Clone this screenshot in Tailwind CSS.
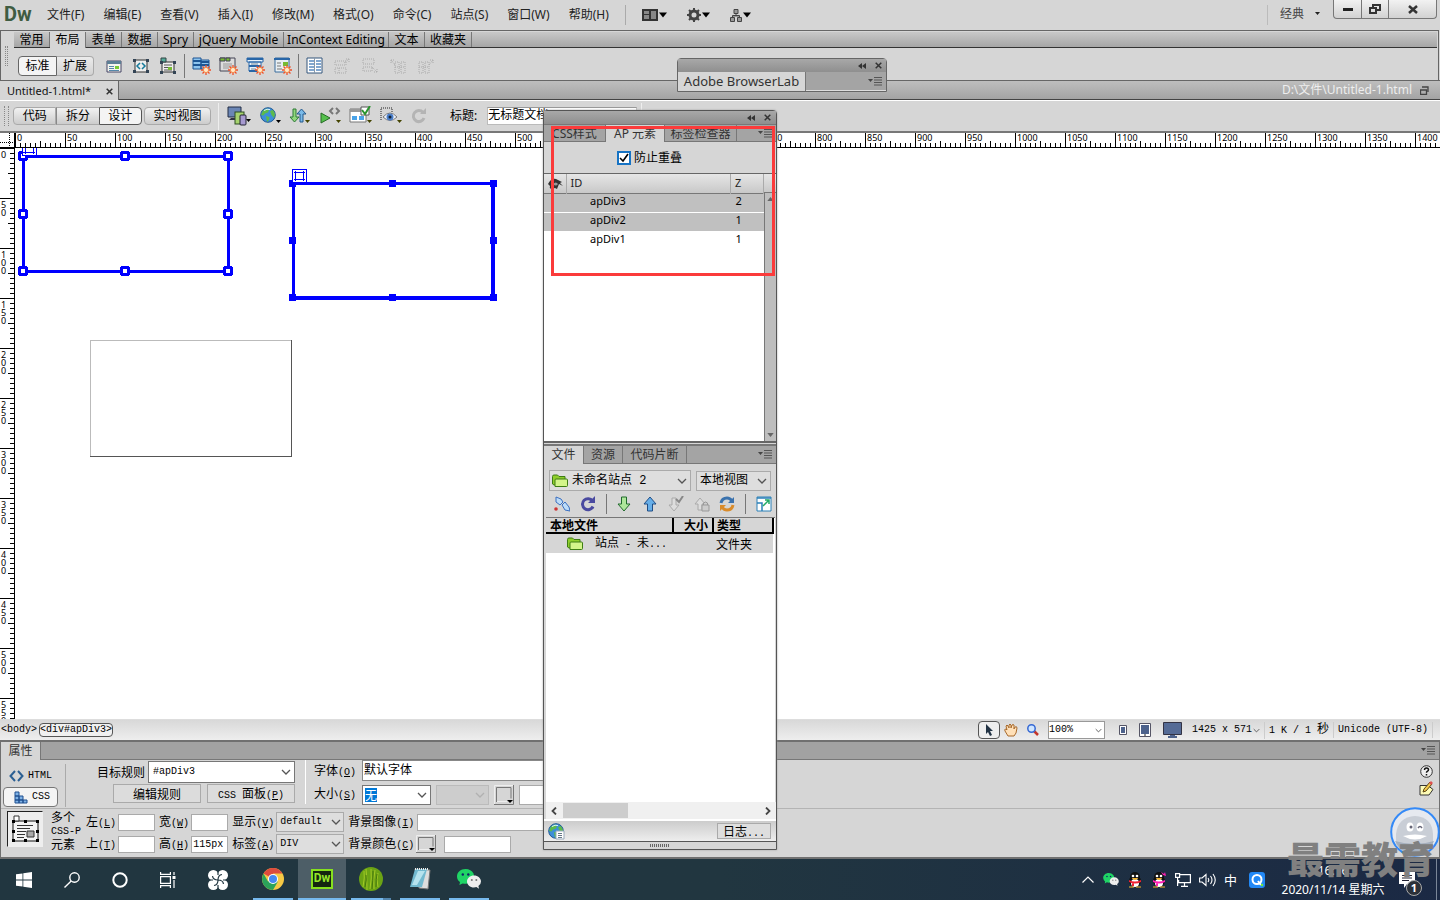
<!DOCTYPE html>
<html lang="zh-CN">
<head>
    <meta charset="UTF-8">
    <meta name="viewport" content="width=device-width, initial-scale=1.0">
    <title>Untitled-1.html</title>
    <script src="https://cdn.jsdelivr.net/npm/@tailwindcss/browser@4"></script>
</head>
<body class="relative flex flex-col h-screen overflow-hidden bg-[#d6d6d6] text-black text-xs leading-4 font-['Noto_Sans','Noto_Sans_CJK_SC',sans-serif]">

    <!-- Shared icons -->
    <svg class="hidden">
        <symbol id="chevron" viewBox="0 0 10 6"><path d="M1 1l4 4 4-4" fill="none" stroke="#555" stroke-width="1.3"/></symbol>
        <symbol id="caret" viewBox="0 0 8 5"><path d="M0 0h8L4 5z"/></symbol>
        <symbol id="panelMenu" viewBox="0 0 14 9"><path d="M0 2h5L2.500 5z" fill="#444"/><path d="M6 .5h8M6 3h8M6 5.500h8M6 8h8" stroke="#555"/></symbol>
        <symbol id="collapse" viewBox="0 0 8 6"><path d="M4 0v6L0 3zM8 0v6L4 3z" fill="#333"/></symbol>
        <symbol id="cross" viewBox="0 0 7 7"><path d="M.7 .7l5.600 5.600M6.300 .7L.7 6.300" stroke="#333" stroke-width="1.500"/></symbol>
        <symbol id="spark" viewBox="0 0 10 10"><path d="M5 0v10M0 5h10M1.500 1.500l7 7M8.500 1.500l-7 7" stroke="#f0502a" stroke-width="1.300"/><circle cx="5" cy="5" r="2.600" fill="#ffe9c9" stroke="#f58a4a"/></symbol>
        <symbol id="folder" viewBox="0 0 16 13"><path d="M.5 10V2.500Q.5 1 2 1h3.500L7 2.500h6V11H2z" fill="#8fce2c" stroke="#3e7d14"/><path d="M3 12.500V6q0-1 1-1h10.500q1 0 1 1v5.500q0 1-1 1z" fill="#d3f58a" stroke="#3e7d14"/></symbol>
        <symbol id="globe" viewBox="0 0 16 16"><circle cx="8" cy="8" r="7.300" fill="#3d8fd8" stroke="#225a94"/><path d="M3 3.500l4-2 2 1.500-1 2.500-3 1-1.500 2L1 8zM6 9l3.500 1L9 13l-2 2zM10 4l3-1 2 4-1 4-2.500-3z" fill="#5dbb4b"/><path d="M4 3.500q3-2 6-1" stroke="#d9f2ff" fill="none"/></symbol>
        <symbol id="wechat" viewBox="0 0 24 20"><path d="M8.500 0C3.500 0 0 3.400 0 7.400c0 2.400 1.200 4.200 3 5.600L2.400 16l3.200-1.600q6 1.600 9.600-2.400Q18 8 16.500 4.500 14 0 8.500 0z" fill="#1fd465"/><circle cx="5.800" cy="5.500" r="1.200" fill="#126"/><circle cx="11.300" cy="5.500" r="1.200" fill="#126"/><path d="M17 6.500c-4 0-7 2.700-7 6s3 6 7 6q1.200 0 2.400-.4L22 19.700l-.6-2.600q2.600-1.800 2.600-4.600c0-3.300-3-6-7-6z" fill="#eee"/><circle cx="14.800" cy="11" r="1" fill="#777"/><circle cx="19.300" cy="11" r="1" fill="#777"/></symbol>
    </svg>

    <!-- Menu bar -->
    <header class="flex h-[30px] shrink-0">
        <h1 class="pl-1 w-[47px] text-xl leading-7 font-bold text-[#3f5c42] font-['Roboto',sans-serif]">Dw</h1>
        <nav class="flex gap-[19px] pt-[7px] text-[#222]">
            <a href="#">文件(F)</a>
            <a href="#">编辑(E)</a>
            <a href="#">查看(V)</a>
            <a href="#">插入(I)</a>
            <a href="#">修改(M)</a>
            <a href="#">格式(O)</a>
            <a href="#">命令(C)</a>
            <a href="#">站点(S)</a>
            <a href="#">窗口(W)</a>
            <a href="#">帮助(H)</a>
        </nav>
        <div class="flex items-center gap-5 ml-4 my-[5px] pl-4 border-l border-[#aaa]">
            <button class="flex items-center gap-px" aria-label="布局">
                <svg class="w-4 h-3" viewBox="0 0 16 12"><path d="M0 0h16v12H0z" fill="#333"/><path d="M2 2h5v3H2zM2 6h5v4H2zM9 2h5v8H9z" fill="#888"/></svg>
                <svg class="w-2 h-[6px]"><use href="#caret"/></svg>
            </button>
            <button class="flex items-center gap-px" aria-label="扩展 Dreamweaver">
                <svg class="w-[14px] h-[14px]" viewBox="0 0 14 14"><circle cx="7" cy="7" r="4" fill="none" stroke="#444" stroke-width="3"/><path d="M7 0v3M7 11v3M0 7h3M11 7h3M2 2l2 2M10 10l2 2M12 2l-2 2M4 10l-2 2" stroke="#444" stroke-width="2"/></svg>
                <svg class="w-2 h-[6px]"><use href="#caret"/></svg>
            </button>
            <button class="flex items-center gap-px" aria-label="站点">
                <svg class="w-3 h-[13px]" viewBox="0 0 12 13"><path d="M4 .5h4v4H4zM.5 8.500h4v4h-4zM7.500 8.500h4v4h-4zM6 4.500v2M2.500 8V6.500h7V8" fill="#999" stroke="#444"/></svg>
                <svg class="w-2 h-[6px]"><use href="#caret"/></svg>
            </button>
        </div>
        <button class="flex items-center gap-[11px] ml-auto mt-[5px] mb-[5px] pl-3 pb-[3px] border-l border-[#bbb] text-[#444]">经典
            <svg class="w-[5px] h-[3px]" viewBox="0 0 5 3"><path d="M0 0h5L2.500 3z" fill="#222"/></svg>
        </button>
        <div class="flex h-[19px] ml-[13px] mr-[3px] rounded-b border border-t-0 border-[#777] bg-linear-to-b from-[#f2f2f2] to-[#d2d2d2] divide-x divide-[#777]">
            <button class="flex justify-center items-center w-7" aria-label="最小化"><svg class="w-[10px] h-[3px]"><path d="M0 0h10v3H0z" fill="#222"/></svg></button>
            <button class="flex justify-center items-center w-[27px]" aria-label="还原"><svg class="w-3 h-[10px]" viewBox="0 0 12 10"><path d="M4 3V1h7v5H8M1 4h6v5H1z" fill="none" stroke="#333" stroke-width="2"/></svg></button>
            <button class="flex justify-center items-center w-[47px]" aria-label="关闭"><svg class="w-[10px] h-[9px]" viewBox="0 0 10 9"><path d="M1 1l8 7M9 1L1 8" stroke="#333" stroke-width="2.500"/></svg></button>
        </div>
    </header>

    <!-- Insert bar -->
    <section class="flex h-[50px] shrink-0 mr-px border-t border-x border-[#666]">
        <div class="w-[3px] h-5 ml-1 mr-[6px] mt-[15px] border-x border-dotted border-[#888]"></div>
        <div class="flex-1 mt-px">
            <div class="flex h-4 mr-px border-b border-[#333] bg-linear-to-b from-[#c8c8c8] to-[#a6a6a6]">
                <button class="w-9 border-r border-[#777]">常用</button>
                <button class="w-9 h-4 border-r border-[#777] bg-[#d6d6d6]">布局</button>
                <button class="w-9 border-r border-[#777]">表单</button>
                <button class="w-9 border-r border-[#777]">数据</button>
                <button class="w-9 border-r border-[#777]">Spry</button>
                <button class="w-[90px] border-r border-[#777]">jQuery Mobile</button>
                <button class="w-[105px] border-r border-[#777] whitespace-nowrap">InContext Editing</button>
                <button class="w-9 border-r border-[#777]">文本</button>
                <button class="w-[47px] border-r border-[#777]">收藏夹</button>
            </div>
            <div class="flex items-center h-[31px] pt-1 pl-1">
                <button class="w-[39px] h-5 rounded-l border border-[#666] bg-[#f4f4f4]">标准</button>
                <button class="w-[37px] h-5 rounded-r border border-l-0 border-[#aaa] bg-linear-to-b from-[#ececec] to-[#d2d2d2]">扩展</button>
                <div class="flex items-center gap-[9px] ml-[11px]">
                    <svg class="w-[18px] h-[18px]" viewBox="0 0 18 18"><path d="M2 4h14v11H2z" fill="#f5f5ee" stroke="#446"/><path d="M2 4h14v3H2z" fill="#5c7f95"/><path d="M4 9.500h5M4 11.500h5M4 13.500h10" stroke="#58a"/><path d="M10 9h4v3h-4z" fill="#7c3"/></svg>
                    <svg class="w-[18px] h-[18px]" viewBox="0 0 18 18"><path d="M3 3h12v12H3z" fill="#eee" stroke="#333"/><path d="M1 2h3v3H1zM14 2h3v3h-3zM1 13h3v3H1zM14 13h3v3h-3z" fill="#345"/><path d="M8 6L5 9l3 3M10 6l3 3-3 3" fill="none" stroke="#167a9a" stroke-width="1.500"/></svg>
                    <svg class="w-[18px] h-[18px]" viewBox="0 0 18 18"><path d="M3 5h12v10H3z" fill="#eee" stroke="#333"/><path d="M2 1h5v4H2z" fill="#5a9" stroke="#344"/><path d="M1 4h3v3H1zM14 4h3v3h-3zM1 14h3v3H1zM14 14h3v3h-3z" fill="#345"/><path d="M5 8h8M5 10.500h4M5 13h8" stroke="#555"/><path d="M9 10h4v3H9z" fill="#7b3"/></svg>
                </div>
                <div class="h-6 mx-[7px] border-l border-[#777]"></div>
                <div class="flex items-center gap-2">
                    <svg class="w-[19px] h-[18px]" viewBox="0 0 19 18"><path d="M1 1h8v11H1zM9 3h8v9H9z" fill="#8ec4ee" stroke="#1c5594"/><path d="M1 4h8M1 8h16M9 5h8" stroke="#1c5594" stroke-width="2"/><use href="#spark" x="9" y="8" width="10" height="10"/></svg>
                    <svg class="w-[19px] h-[18px]" viewBox="0 0 19 18"><path d="M1 1h15v13H1z" fill="#ddd" stroke="#445"/><path d="M1 1h5v3H1zM7 1h4v3H7z" fill="#7b3" stroke="#445"/><path d="M4 7h9M4 9h9M4 11h6" stroke="#999"/><use href="#spark" x="9" y="8" width="10" height="10"/></svg>
                    <svg class="w-[19px] h-[18px]" viewBox="0 0 19 18"><path d="M1 1h16v4H1zM3 5h12v9H3z" fill="#e9f2fa" stroke="#2866a8"/><path d="M1 2h16M3 9h12M3 14h9" stroke="#2866a8" stroke-width="2"/><path d="M5 7h7M5 12h5" stroke="#789"/><use href="#spark" x="9" y="8" width="10" height="10"/></svg>
                    <svg class="w-[19px] h-[18px]" viewBox="0 0 19 18"><path d="M2 1h14v14H2z" fill="#e8eef2" stroke="#3b6c9d"/><path d="M1 2h16" stroke="#2866a8" stroke-width="2"/><path d="M10 5h5v4h-5z" fill="#7b3"/><path d="M4 6h4M4 9h4M4 12h5" stroke="#777"/><use href="#spark" x="9" y="8" width="10" height="10"/></svg>
                </div>
                <div class="h-6 ml-[6px] mr-[7px] border-l border-[#777]"></div>
                <div class="flex items-center gap-[10px]">
                    <svg class="w-[17px] h-[17px]" viewBox="0 0 17 17"><path d="M1 1h15v15H1z" fill="#fff" stroke="#34577c"/><path d="M3 4h5M10 4h5M3 7h5M10 7h5M3 10h5M10 10h5M3 13h5M10 13h5" stroke="#5a8bc0" stroke-width="1.500"/><path d="M8.500 1v15" stroke="#89a"/></svg>
                    <svg class="w-[18px] h-[18px]" viewBox="0 0 18 18"><path d="M2 4h11v4H2zM2 11h11v5H2zM11 6l5-4M16 2v3M16 2h-3M6 11v5" fill="none" stroke="#aaa" stroke-dasharray="1 1"/></svg>
                    <svg class="w-[18px] h-[18px]" viewBox="0 0 18 18"><path d="M2 2h11v5H2zM2 10h9v4H2zM11 10l5 5M16 15v-3M16 15h-3" fill="none" stroke="#aaa" stroke-dasharray="1 1"/></svg>
                    <svg class="w-[18px] h-[18px]" viewBox="0 0 18 18"><path d="M6 5h4v11H6zM12 5h4v11h-4zM6 8L2 3M2 3v3M2 3h3M6 10h10" fill="none" stroke="#aaa" stroke-dasharray="1 1"/></svg>
                    <svg class="w-[18px] h-[18px]" viewBox="0 0 18 18"><path d="M2 5h4v11H2zM8 5h4v11H8zM12 8l4-5M16 3v3M16 3h-3M2 10h10" fill="none" stroke="#aaa" stroke-dasharray="1 1"/></svg>
                </div>
            </div>
        </div>
    </section>

    <!-- Document tabs -->
    <section class="flex h-5 shrink-0 border-t border-[#666] border-b border-b-[#444] bg-linear-to-b from-[#bebebe] to-[#a4a4a4]">
        <div class="flex items-center justify-between w-[119px] pl-[7px] pr-[5px] h-5 bg-[#d6d6d6] border-r border-[#666]">
            <a href="#" class="text-[11px] text-[#111]">Untitled-1.html*</a>
            <button aria-label="关闭"><svg class="w-[7px] h-[7px]"><use href="#cross"/></svg></button>
        </div>
        <div class="flex items-center gap-2 ml-auto mr-[11px] text-[#eee]">D:\文件\Untitled-1.html
            <svg class="w-[9px] h-[9px]" viewBox="0 0 9 9"><path d="M2 1h6v5M.5 4h6v4.500h-6zM0 4h7" fill="none" stroke="#444" stroke-width="1.300"/></svg>
        </div>
    </section>

    <!-- Document toolbar -->
    <section class="flex items-center h-[33px] shrink-0 border-b-2 border-[#777] border-t border-t-white pl-1">
        <div class="w-[5px] h-5 mr-1 border-x border-dotted border-[#888]"></div>
        <div class="flex h-[18px] w-[129px] leading-4">
            <button class="flex-1 rounded-l border border-[#aaa] bg-linear-to-b from-[#f2f2f2] to-[#ccc]">代码</button>
            <button class="flex-1 border border-x-0 border-[#aaa] border-l border-l-[#888] bg-linear-to-b from-[#f2f2f2] to-[#ccc]">拆分</button>
            <button class="flex-1 rounded-r border border-[#555] bg-[#f4f4f4]">设计</button>
        </div>
        <button class="w-[67px] h-[18px] leading-4 ml-[2px] rounded border border-[#aaa] bg-linear-to-b from-[#f2f2f2] to-[#ccc]">实时视图</button>
        <div class="h-[27px] ml-[7px] border-l border-[#eee]"></div>
        <div class="flex items-center gap-2 ml-2">
            <svg class="w-[24px] h-5" viewBox="0 0 24 20"><path d="M1 1h13v10H1z" fill="#6b86b5" stroke="#222c44"/><path d="M4 12h6l2 2H2z" fill="#334"/><rect x="8" y="6" width="9" height="12" fill="#a7d36f" stroke="#2c4c22"/><rect x="13" y="9" width="6" height="10" rx="1" fill="#a79ad0" stroke="#223"/><path d="M19 13h5l-2.500 3z"/></svg>
            <svg class="w-[22px] h-5" viewBox="0 0 22 20"><use href="#globe" x="1" y="1" width="16" height="16"/><path d="M17 14h5l-2.500 3z"/></svg>
            <svg class="w-[22px] h-5" viewBox="0 0 22 20"><path d="M4 3h3v8h3l-4.500 5L1 11h3z" fill="#91d77c" stroke="#2c7a36"/><path d="M11 16h3V8h3l-4.500-5L8 8h3z" fill="#79b9e8" stroke="#24588c"/><path d="M16 14h5l-2.500 3z" fill="#440"/></svg>
            <svg class="w-[22px] h-5" viewBox="0 0 22 20"><path d="M2 7l9 5-9 5z" fill="#55c04c" stroke="#266b26"/><path d="M14 2l-3 3 3 3M17 2l3 3-3 3" fill="none" stroke="#777" stroke-width="2"/><path d="M17 14h5l-2.500 3z" fill="#440"/></svg>
            <svg class="w-[23px] h-5" viewBox="0 0 23 20"><path d="M1 3h16v13H1z" fill="#fff" stroke="#777"/><path d="M1 3h16v3H1z" fill="#999"/><path d="M3 10h5v4H3zM10 10h5v4h-5z" fill="#4aa3e8"/><path d="M12 1h8v8h-8z" fill="#fff" stroke="#555"/><path d="M13 4l3 4 5-8" fill="none" stroke="#29952d" stroke-width="2"/><path d="M18 14h5l-2.500 3z" fill="#440"/></svg>
            <svg class="w-[23px] h-5" viewBox="0 0 23 20"><path d="M1 14V2h11v4" fill="none" stroke="#222" stroke-dasharray="1 1"/><path d="M3 11q7-8 14 0-7 7-14 0z" fill="#eef3fb" stroke="#777"/><circle cx="10" cy="11" r="3.500" fill="#4c7fc9"/><circle cx="10" cy="11" r="1.500" fill="#123"/><path d="M17 14h5l-2.500 3z" fill="#440"/></svg>
            <svg class="w-4 h-4" viewBox="0 0 16 16"><path d="M12 4.500A5.500 5.500 0 1 0 13 10" fill="none" stroke="#b4b4b4" stroke-width="3"/><path d="M9 6h6V0z" fill="#b4b4b4"/></svg>
        </div>
        <label for="docTitle" class="ml-[23px]">标题:</label>
        <input id="docTitle" type="text" value="无标题文档" class="w-[150px] h-[18px] ml-[10px] pb-1 border border-t-[#999] border-[#bbb] bg-white">
        <div class="h-[27px] ml-1 border-l border-[#eee]"></div>
    </section>

    <!-- Horizontal ruler -->
    <section class="flex h-[15px] shrink-0 bg-white border-b border-black">
        <div class="flex w-[15px] shrink-0 border-r border-black">
            <svg class="w-[14px] h-[14px]"><path d="M0 9.500h14M9.500 0v14" stroke="#000" stroke-dasharray="1 1"/></svg>
        </div>
        <div class="grid flex-1 min-w-0 overflow-hidden">
            <svg class="col-start-1 row-start-1 w-full h-[14px]">
                <pattern id="ticksX" width="50" height="14" patternUnits="userSpaceOnUse"><path d="M.5 0v14M5.500 10v4M10.500 10v4M15.500 10v4M20.500 10v4M25.500 8v6M30.500 10v4M35.500 10v4M40.500 10v4M45.500 10v4" stroke="#000"/></pattern>
                <rect width="100%" height="14" fill="url(#ticksX)"/>
            </svg>
            <div id="rulerX" class="col-start-1 row-start-1 flex min-w-0 text-[9px] leading-[10px]"></div>
        </div>
    </section>

    <!-- Canvas with vertical ruler -->
    <section class="flex flex-1 min-h-0 bg-white">
        <div class="grid w-[15px] shrink-0 min-h-0 overflow-hidden border-r border-black">
            <svg class="col-start-1 row-start-1 w-[14px] h-full">
                <pattern id="ticksY" width="14" height="50" patternUnits="userSpaceOnUse"><path d="M0 .5h14M10 5.500h4M10 10.500h4M10 15.500h4M10 20.500h4M8 25.500h6M10 30.500h4M10 35.500h4M10 40.500h4M10 45.500h4" stroke="#000"/></pattern>
                <rect width="14" height="100%" fill="url(#ticksY)"/>
            </svg>
            <div id="rulerY" class="col-start-1 row-start-1 min-h-0 h-0 text-[9px] leading-[8px]"></div>
        </div>
        <main class="relative flex-1 overflow-hidden">
            <svg class="absolute left-0 top-0 w-[500px] h-[320px]" shape-rendering="crispEdges">
                <path d="M8.500 8.500h205v115h-205z" fill="none" stroke="#00f" stroke-width="3"/>
                <g fill="#fff" stroke="#00f" stroke-width="3" stroke-linejoin="bevel">
                    <path d="M4.500 4.500h7v7h-7zM106.500 4.500h7v7h-7zM209.500 4.500h7v7h-7zM4.500 62.500h7v7h-7zM209.500 62.500h7v7h-7zM4.500 119.500h7v7h-7zM106.500 119.500h7v7h-7zM209.500 119.500h7v7h-7z"/>
                </g>
                <path d="M7.500-5.500h14v13h-14z" fill="#fff" stroke="#00f"/>
                <path d="M8 4.500h12M10.500 0v6M18.500 0v6" stroke="#00f"/>
                <path d="M478 35.500H278.500V149" fill="none" stroke="#00f" stroke-width="3"/>
                <path d="M478 34v116H277" fill="none" stroke="#00f" stroke-width="4"/>
                <path d="M274 32h7v7h-7zM374 32h7v7h-7zM475 32h7v7h-7zM274 89h7v7h-7zM475 89h7v7h-7zM274 146h7v7h-7zM374 146h7v7h-7zM475 146h7v7h-7z" fill="#00f"/>
                <path d="M277.500 21.500h14v13h-14z" fill="#fff" stroke="#00f"/>
                <path d="M279 24.500h11M279 31.500h11M280.500 23v10M288.500 23v10" stroke="#00f"/>
                <path d="M75.500 309V192.500H276" fill="none" stroke="#bbb"/>
                <path d="M276.500 192V308.500H75" fill="none" stroke="#555"/>
            </svg>
        </main>
    </section>

    <!-- Tag selector and status bar -->
    <footer class="flex items-center h-[21px] shrink-0 border-t border-[#ddd] bg-linear-to-b from-[#d8d8d8] to-[#eee] text-[10px] font-['Liberation_Mono','Noto_Sans_CJK_SC',monospace]">
        <a href="#" class="ml-px">&lt;body&gt;</a>
        <a href="#" class="ml-[2px] rounded border border-[#555] bg-[#f0f0f0] leading-3">&lt;div#apDiv3&gt;</a>
        <button class="flex items-center justify-center w-[22px] h-[18px] ml-auto rounded border border-[#555] bg-[#eee]" aria-label="选取工具"><svg class="w-[8px] h-3" viewBox="0 0 8 12"><path d="M1 0v10l2-2 2 4 2-1-2-4h3z" fill="#234"/></svg></button>
        <button class="ml-1" aria-label="手形工具"><svg class="w-[14px] h-[14px]" viewBox="0 0 14 14"><path d="M4 13L1 8Q0 6 2 6l1 1-1-4q1-2 2 0l1 2V2q1-2 2 0v3l1-3q1-1 2 0v4l1-2q2-1 2 1l-1 5-2 3z" fill="#ffe0b8" stroke="#a86a2c"/></svg></button>
        <button class="ml-[9px]" aria-label="缩放工具"><svg class="w-3 h-3" viewBox="0 0 12 12"><path d="M7 7l4 4" stroke="#c3352b" stroke-width="2.500"/><circle cx="4.500" cy="4.500" r="3.700" fill="#cfe6ff" stroke="#3568d4" stroke-width="1.500"/></svg></button>
        <div class="grid items-center w-[57px] h-[18px] ml-[9px]">
            <select aria-label="缩放比率" class="col-start-1 row-start-1 appearance-none h-[18px] pb-1 border border-[#999] bg-white"><option>100%</option></select>
            <svg class="col-start-1 row-start-1 justify-self-end w-[7px] h-[5px] mr-[3px] pointer-events-none"><use href="#chevron"/></svg>
        </div>
        <svg class="w-2 h-[10px] ml-[14px]" viewBox="0 0 8 10"><path d="M.5 .5h7v9h-7z" fill="#fff" stroke="#556"/><path d="M2 2h4v6H2z" fill="#4d628c"/></svg>
        <svg class="w-3 h-[14px] ml-3" viewBox="0 0 12 14"><path d="M.5 .5h11v13H.5z" fill="#fff" stroke="#556"/><path d="M2 2h8v9H2z" fill="#4d628c"/><path d="M5 12h2" stroke="#222"/></svg>
        <svg class="w-[19px] h-4 ml-3" viewBox="0 0 19 16"><path d="M.5 .5h18v12H.5z" fill="#556b96" stroke="#334"/><path d="M7 13h5v1h2v2H5v-2h2z" fill="#4d628c"/></svg>
        <button class="flex items-center gap-px ml-[10px]">1425 x 571<svg class="w-[7px] h-[5px]"><use href="#chevron"/></svg></button>
        <span class="ml-1 pl-1 border-l border-[#ccc]">1 K / 1 <span class="text-xs">秒</span></span>
        <span class="ml-1 pl-1 pr-1 mr-[7px] border-x border-[#ccc]">Unicode (UTF-8)</span>
    </footer>

    <!-- Property inspector -->
    <section class="h-[119px] shrink-0 border border-b-2 border-t-2 border-[#707070] font-['Noto_Sans_CJK_SC',sans-serif]">
        <div class="flex h-[18px] bg-[#a2a2a2] border-b border-[#777]">
            <h2 class="w-10 h-[18px] text-center leading-4 border-r border-[#777] bg-[#d6d6d6] text-[#333]">属性</h2>
            <button class="ml-auto mr-1" aria-label="面板菜单"><svg class="w-[14px] h-[9px]"><use href="#panelMenu"/></svg></button>
        </div>
        <div class="flex h-[49px] border-b border-[#b4b4b4]">
            <div class="flex flex-col justify-end w-[65px] mt-1 mb-px pl-[2px] border-r border-[#aaa] text-[10px] font-['Liberation_Mono',monospace]">
                <button class="flex items-center gap-1 h-[22px] pl-[6px]">
                    <svg class="w-[15px] h-[12px]" viewBox="0 0 15 12"><path d="M6 1L1.500 6 6 11M9 1l4.500 5L9 11" fill="none" stroke="#2b5f93" stroke-width="2"/></svg>HTML
                </button>
                <button class="flex items-center gap-1 w-[55px] h-5 pl-[10px] rounded border border-[#777] bg-[#f4f4f4]">
                    <svg class="w-[14px] h-[13px]" viewBox="0 0 14 13"><path d="M1 1h4v4H1zM1 5h4v4H1zM5 5h4v4H5zM1 9h4v3H1zM5 9h4v3H5zM9 9h4v3H9z" fill="#7fb2e6" stroke="#1f4f8f"/></svg>CSS
                </button>
            </div>
            <div class="grid grid-cols-[88px_88px] gap-x-[6px] content-start ml-[47px]">
                <div class="col-span-2 flex items-center justify-between h-[23px]">
                    <label for="rule" class="-ml-4">目标规则</label>
                    <div class="grid items-center w-[147px]">
                        <select id="rule" class="col-start-1 row-start-1 appearance-none h-[22px] pl-1 border border-[#777] bg-white text-[10px] font-['Liberation_Mono',monospace]"><option>#apDiv3</option></select>
                        <svg class="col-start-1 row-start-1 justify-self-end w-[10px] h-[6px] mr-1 pointer-events-none"><use href="#chevron"/></svg>
                    </div>
                </div>
                <button class="h-[19px] leading-4 mt-px border border-[#aaa] bg-[#dcdcdc]">编辑规则</button>
                <button class="h-[19px] leading-4 mt-px border border-[#aaa] bg-[#dcdcdc]"><span class="text-[10px] font-['Liberation_Mono',monospace]">CSS </span>面板<span class="text-[10px] font-['Liberation_Mono',monospace]">(<u>P</u>)</span></button>
            </div>
            <div class="h-11 ml-[10px] border-l border-white"></div>
            <div class="grid grid-cols-[48px_auto] content-start ml-2">
                <label for="font" class="leading-[20px]">字体<span class="text-[10px] font-['Liberation_Mono',monospace]">(<u>O</u>)</span></label>
                <select id="font" class="appearance-none w-[240px] h-[21px] pb-[3px] pl-px border border-[#888] bg-white"><option>默认字体</option></select>
                <label for="size" class="leading-[20px]">大小<span class="text-[10px] font-['Liberation_Mono',monospace]">(<u>S</u>)</span></label>
                <div class="flex items-center gap-[5px] pt-px">
                    <div class="grid items-center w-[69px]">
                        <span class="col-start-1 row-start-1 flex items-center h-5 pl-[2px] border border-[#777] bg-white"><span class="bg-[#0078d7] text-white leading-[14px]">无</span></span>
                        <select id="size" class="col-start-1 row-start-1 appearance-none h-5 opacity-0"><option>无</option></select>
                        <svg class="col-start-1 row-start-1 justify-self-end w-[10px] h-[6px] mr-1 pointer-events-none"><use href="#chevron"/></svg>
                    </div>
                    <div class="grid items-center w-[53px] opacity-60">
                        <select disabled aria-label="单位" class="col-start-1 row-start-1 appearance-none h-5 border border-[#aaa] bg-[#c8c8c8]"></select>
                        <svg class="col-start-1 row-start-1 justify-self-end w-[10px] h-[6px] mr-1 opacity-40 pointer-events-none"><use href="#chevron"/></svg>
                    </div>
                    <button aria-label="文本颜色" class="w-5 h-5"><svg class="w-5 h-5" viewBox="0 0 20 20"><path d="M.5 20V.5H20" fill="none" stroke="#eee"/><path d="M0 19.500h19.500V0M2.500 17V2.500H17v11" fill="none" stroke="#777"/><path d="M3 16.500h10" stroke="#eee"/><path d="M13 15h6l-3 3z"/></svg></button>
                    <input aria-label="颜色值" type="text" class="w-[66px] h-5 border border-[#aaa] bg-white">
                </div>
            </div>
            <div class="flex flex-col items-center gap-[3px] ml-auto mr-[5px] pt-[5px]">
                <button aria-label="帮助"><svg class="w-[13px] h-[13px]" viewBox="0 0 13 13"><circle cx="6.500" cy="6.500" r="5.800" fill="#eee" stroke="#333"/><path d="M4.500 5q0-2 2-2t2 1.800q0 1-1.200 1.600-.8.400-.8 1.300M6.500 9v1.400" fill="none" stroke="#111" stroke-width="1.500"/></svg></button>
                <button aria-label="快速标签编辑器"><svg class="w-[15px] h-[15px]" viewBox="0 0 15 15"><path d="M1 4.500h8l5 4-4 5.500H1z" fill="#fdfbb5" stroke="#333"/><path d="M4 11l1-3 6-7 2 2-6 7z" fill="#f5c94b" stroke="#5b4514"/><path d="M10 2l2-2 2 2-2 2z" fill="#e05050"/></svg></button>
            </div>
        </div>
        <div class="flex h-[47px] pt-[2px]">
            <div class="w-9 h-9 ml-[6px] bg-[#eee] border border-[#222] border-r-[#eee] border-b-[#eee]">
                <svg class="w-[34px] h-[34px]" viewBox="0 0 34 34"><path d="M5 9h25v20H5z" fill="#f4f4f4" stroke="#111"/><path d="M6 4h5v5H6z" fill="#fff" stroke="#333"/><path d="M4 8h3v3H4zM16 8h3v3h-3zM28 8h3v3h-3zM4 18h3v3H4zM28 18h3v3h-3zM4 27h3v3H4zM16 27h3v3h-3zM28 27h3v3h-3z"/><path d="M9 13.500h16M9 16.500h13M9 19.500h9M9 22.500h8M9 25.500h7" stroke="#333"/><path d="M19 19h7v6h-7z" fill="#aaa" stroke="#333"/></svg>
            </div>
            <p class="w-[35px] ml-2 leading-[12px]">多个<br><span class="text-[10px] font-['Liberation_Mono',monospace]">CSS-P</span><br>元素</p>
            <div class="grid grid-cols-[auto_37px_auto_37px_auto_68px] auto-rows-[22px] items-center gap-x-[2px] content-start">
                <label for="left">左<span class="text-[10px] font-['Liberation_Mono',monospace]">(<u>L</u>)</span></label>
                <input id="left" type="text" class="h-[17px] border border-[#aaa] bg-white">
                <label for="width" class="ml-[2px]">宽<span class="text-[10px] font-['Liberation_Mono',monospace]">(<u>W</u>)</span></label>
                <input id="width" type="text" class="h-[17px] border border-[#aaa] bg-white">
                <label for="display" class="ml-[2px]">显示<span class="text-[10px] font-['Liberation_Mono',monospace]">(<u>V</u>)</span></label>
                <div class="grid items-center">
                    <select id="display" class="col-start-1 row-start-1 appearance-none h-5 pl-[3px] border border-[#aaa] bg-[#dedede] text-[10px] font-['Liberation_Mono',monospace]"><option>default</option></select>
                    <svg class="col-start-1 row-start-1 justify-self-end w-[10px] h-[6px] mr-[3px] pointer-events-none"><use href="#chevron"/></svg>
                </div>
                <label for="top">上<span class="text-[10px] font-['Liberation_Mono',monospace]">(<u>T</u>)</span></label>
                <input id="top" type="text" class="h-[17px] border border-[#aaa] bg-white">
                <label for="height" class="ml-[2px]">高<span class="text-[10px] font-['Liberation_Mono',monospace]">(<u>H</u>)</span></label>
                <input id="height" type="text" value="115px" class="h-[17px] pl-px border border-[#aaa] bg-white text-[10px] font-['Liberation_Mono',monospace]">
                <label for="tag" class="ml-[2px]">标签<span class="text-[10px] font-['Liberation_Mono',monospace]">(<u>A</u>)</span></label>
                <div class="grid items-center">
                    <select id="tag" class="col-start-1 row-start-1 appearance-none h-5 pl-[3px] border border-[#aaa] bg-[#dedede] text-[10px] font-['Liberation_Mono',monospace]"><option>DIV</option></select>
                    <svg class="col-start-1 row-start-1 justify-self-end w-[10px] h-[6px] mr-[3px] pointer-events-none"><use href="#chevron"/></svg>
                </div>
            </div>
            <div class="ml-1">
                <div class="flex items-center gap-[3px] h-[22px]">
                    <label for="bgImage">背景图像<span class="text-[10px] font-['Liberation_Mono',monospace]">(<u>I</u>)</span></label>
                    <input id="bgImage" type="text" class="w-[200px] h-[17px] border border-[#aaa] bg-white">
                </div>
                <div class="flex items-center gap-[2px] h-[22px]">
                    <label for="bgColor">背景颜色<span class="text-[10px] font-['Liberation_Mono',monospace]">(<u>C</u>)</span></label>
                    <button aria-label="背景颜色" class="w-5 h-[18px]"><svg class="w-5 h-[18px]" viewBox="0 0 20 18"><path d="M.5 18V.5H20" fill="none" stroke="#eee"/><path d="M0 17.500h19.500V0M2.500 15V2.500H17v9" fill="none" stroke="#777"/><path d="M3 14.500h10" stroke="#eee"/><path d="M13 13h6l-3 3z"/></svg></button>
                    <input id="bgColor" type="text" class="w-[67px] h-[17px] ml-[6px] border border-[#aaa] bg-white">
                </div>
            </div>
        </div>
    </section>

    <!-- Taskbar -->
    <footer class="flex h-[41px] shrink-0 bg-linear-to-r from-[#213640] via-[#213640] to-[#1b2944] text-white">
        <button class="flex items-center justify-center w-12" aria-label="开始"><svg class="w-4 h-4" viewBox="0 0 16 16" fill="#fff"><path d="M0 2.300L6.500 1.400v6.200H0zM7.300 1.300L16 0v7.600H7.300zM0 8.400h6.500v6.200L0 13.700zM7.300 8.400H16V16l-8.700-1.300z"/></svg></button>
        <button class="flex items-center justify-center w-12" aria-label="搜索"><svg class="w-4 h-4" viewBox="0 0 16 16" fill="none" stroke="#fff" stroke-width="1.400"><circle cx="10.500" cy="5.500" r="4.700"/><path d="M7.200 9L.5 15.500"/></svg></button>
        <button class="flex items-center justify-center w-12" aria-label="Cortana"><svg class="w-4 h-4" viewBox="0 0 16 16"><circle cx="8" cy="8" r="6.700" fill="none" stroke="#fff" stroke-width="2"/></svg></button>
        <button class="flex items-center justify-center w-12" aria-label="任务视图"><svg class="w-4 h-4" viewBox="0 0 16 16" fill="none" stroke="#fff" stroke-width="1.200"><path d="M.6 0v2.400h9.800V0M.6 4.600h9.800v6.800H.6zM.6 16v-2.400h9.800V16M14 0v3M14 8v8"/><path d="M14 4v3" stroke-width="3"/></svg></button>
        <button class="flex items-center justify-center w-12 ml-[2px]" aria-label="搜狗"><svg class="w-5 h-5" viewBox="0 0 20 20"><rect x="5" y="5" width="10" height="10" fill="#fff"/><circle cx="5.300" cy="5.300" r="5.300" fill="#fff"/><circle cx="14.700" cy="5.300" r="5.300" fill="#fff"/><circle cx="14.700" cy="14.700" r="5.300" fill="#fff"/><circle cx="5.300" cy="14.700" r="5.300" fill="#fff"/><path d="M10 10Q5 10 4.500 6M10 10Q10 5 14 4.500M10 10q5 0 5.500 4M10 10q0 5-4 5.500M10 0v5M20 10h-5M10 20v-5M0 10h5" fill="none" stroke="#213640" stroke-width="1.200"/></svg></button>
        <div class="flex gap-px ml-[7px]">
            <button class="flex flex-col items-center w-12" aria-label="Chrome"><svg class="w-[22px] h-[22px] my-auto" viewBox="0 0 22 22"><circle cx="11" cy="11" r="11" fill="#f6c945"/><path d="M11 11L1.500 5.500A11 11 0 0 1 20.500 5.500H11z" fill="#dd4b3e"/><path d="M1.500 5.500A11 11 0 0 0 11 22l4.800-8.200L11 11 6 13.500z" fill="#2ba35a"/><circle cx="11" cy="11" r="5" fill="#fff"/><circle cx="11" cy="11" r="4" fill="#4688f1"/></svg><span class="w-10 h-[2px] bg-[#76b9ed]"></span></button>
            <button class="flex flex-col items-center w-12 bg-[#4d5e67]"><span class="w-[22px] h-5 my-auto border-2 border-[#86e01e] bg-[#14260f] text-[#95e62a] text-xs leading-[15px] font-bold font-['Roboto',sans-serif]">Dw</span><span class="w-12 h-[2px] bg-[#76b9ed]"></span></button>
            <button class="flex flex-col items-center w-12" aria-label="图片"><svg class="w-6 h-6 my-auto" viewBox="0 0 24 24"><circle cx="12" cy="12" r="12" fill="#6ba314"/><path d="M4 20Q6 10 5 4M8 23Q8 10 7 2M11 22q2-12 1-20M15 22q-1-10 1-19M19 20q-2-8 0-14" fill="none" stroke="#a2c926"/><path d="M6 20q2-8 1-12M13 22q1-8 1-18M17 20q0-8 1-13" fill="none" stroke="#47780d"/></svg><span class="w-10 h-[2px] border-r-8 border-[#5385ad] bg-[#76b9ed]"></span></button>
            <button class="flex flex-col items-center w-12" aria-label="记事本"><svg class="w-6 h-6 my-auto" viewBox="0 0 24 24"><path d="M7 2l15 1-2 19-9-1z" fill="#ddd" stroke="#777"/><path d="M7 2h12l-5 18H2z" fill="#72b9cf"/><path d="M10 4h7L9 18H4z" fill="#b6e3ee"/><path d="M7 2h13" stroke="#eee" stroke-width="2" stroke-dasharray="1 1"/></svg><span class="w-10 h-[2px] bg-[#76b9ed]"></span></button>
            <button class="flex flex-col items-center w-12" aria-label="微信"><svg class="w-6 h-5 my-auto"><use href="#wechat"/></svg><span class="w-10 h-[2px] bg-[#76b9ed]"></span></button>
        </div>
        <div class="flex items-center gap-2 ml-auto">
            <svg class="w-3 h-[7px] mr-px" viewBox="0 0 12 7"><path d="M.5 6.500L6 1l5.500 5.500" fill="none" stroke="#fff" stroke-width="1.200"/></svg>
            <svg class="w-4 h-[13px]"><use href="#wechat"/></svg>
            <svg class="w-4 h-4" viewBox="0 0 16 16"><g id="penguin"><ellipse cx="8" cy="9" rx="6" ry="6" fill="#111"/><circle cx="8" cy="5" r="5" fill="#111"/><ellipse cx="8" cy="11" rx="4" ry="4" fill="#fff"/><circle cx="6" cy="4" r="1.300" fill="#fff"/><circle cx="10" cy="4" r="1.300" fill="#fff"/><path d="M5.500 6.500h5L8 7.500z M2 15h5M9 15h5" fill="#f5b52b" stroke="#f5b52b"/></g><path d="M2 8q6 3 12 0v2q-6 3-12 0zM5 10h2v4H5z" fill="#e23"/></svg>
            <svg class="w-4 h-4" viewBox="0 0 16 16"><use href="#penguin"/><path d="M2 8q6 3 12 0v2q-6 3-12 0zM5 10h2v4H5zM10 0l3 2 1-2 1 4-3-1z" fill="#ff1fb4"/></svg>
            <svg class="w-4 h-[14px]" viewBox="0 0 16 14"><path d="M5 1.600h10.400v8H3.600V7M9.500 10v3M6 13.400h7M.6 .6h4v3.800h-4zM2.600 4v9" fill="none" stroke="#fff" stroke-width="1.200"/></svg>
            <svg class="w-[17px] h-[14px]" viewBox="0 0 17 14"><path d="M.6 5h2.500L7 1.500v11L3.100 9H.6zM9 5q1.500 2 0 4M11.500 3q3 4 0 8M14 1q4.500 6 0 12" fill="none" stroke="#fff" stroke-width="1.100"/></svg>
            <span class="text-[13px]">中</span>
            <svg class="w-4 h-4 ml-1" viewBox="0 0 16 16"><rect width="16" height="16" rx="3" fill="#2288f5"/><circle cx="8" cy="7.500" r="4.500" fill="none" stroke="#fff" stroke-width="2"/><path d="M9 9l3 4" stroke="#fff" stroke-width="2"/><circle cx="13" cy="13" r="1.200" fill="#7e3"/></svg>
            <div class="w-[112px] ml-1 pt-px text-center leading-[19px] whitespace-nowrap"><time class="block">16:16</time><time class="block">2020/11/14 星期六</time></div>
            <button class="relative w-6 h-6 ml-px mr-[14px]" aria-label="通知">
                <svg class="w-6 h-6" viewBox="0 0 24 24"><path d="M1 4h16v12H9l-3 4v-4H1z" fill="#fff"/><path d="M4 7.500h10M4 10h10M4 12.500h7" stroke="#223"/></svg>
                <span class="absolute left-2 top-3 w-4 h-4 rounded-full border border-[#aaa] bg-[#2b3038] text-[11px] leading-[14px] font-bold">1</span>
            </button>
        </div>
        <div class="w-1 border-l border-[#7a8698]"></div>
    </footer>

    <!-- BrowserLab floating panel -->
    <aside class="absolute left-[677px] top-[58px] w-[210px] rounded-t border border-[#666] bg-[#d6d6d6]">
        <div class="flex items-center justify-end gap-[9px] h-[13px] pr-1 bg-linear-to-b from-[#a8a8a8] to-[#8f8f8f]">
            <button aria-label="折叠"><svg class="w-2 h-[6px]"><use href="#collapse"/></svg></button>
            <button aria-label="关闭"><svg class="w-[7px] h-[7px]"><use href="#cross"/></svg></button>
        </div>
        <div class="flex items-center h-[18px] bg-[#a4a4a4]">
            <h2 class="w-[128px] h-[19px] leading-[18px] text-center text-[#333] border-r border-[#777] bg-[#d6d6d6] text-[13px]">Adobe BrowserLab</h2>
            <button class="ml-auto mr-1" aria-label="面板菜单"><svg class="w-[14px] h-[9px]"><use href="#panelMenu"/></svg></button>
        </div>
        <div class="h-px border-t border-[#ddd]"></div>
    </aside>

    <!-- Docked panel group: AP elements and files -->
    <aside class="absolute left-[543px] top-[110px] flex flex-col w-[234px] h-[740px] rounded-t border border-[#555] bg-[#d6d6d6] shadow-[0_0_2px_#999]">
        <div class="flex items-center justify-end gap-[9px] h-[13px] shrink-0 pr-[5px] bg-linear-to-b from-[#a8a8a8] to-[#8f8f8f]">
            <button aria-label="折叠"><svg class="w-2 h-[6px]"><use href="#collapse"/></svg></button>
            <button aria-label="关闭"><svg class="w-[7px] h-[7px]"><use href="#cross"/></svg></button>
        </div>
        <div class="flex h-[18px] shrink-0 border-y border-[#777] bg-[#a4a4a4] text-[#333]">
            <button class="w-[62px] pt-px border-r border-[#777]">CSS样式</button>
            <button class="w-[58px] h-[17px] bg-[#d6d6d6]">AP 元素</button>
            <button class="w-[73px] pt-px border-x border-[#777]">标签检查器</button>
            <button class="ml-auto mr-1" aria-label="面板菜单"><svg class="w-[14px] h-[9px]"><use href="#panelMenu"/></svg></button>
        </div>
        <label class="flex items-center gap-[3px] h-[31px] shrink-0 pl-[73px]">
            <input type="checkbox" checked class="peer appearance-none w-[14px] h-[14px] border-2 border-[#1673c4] bg-white">
            <svg class="w-[10px] h-[10px] -ml-[15px] mr-[2px]" viewBox="0 0 10 10"><path d="M1 5l3 3 5-7" fill="none" stroke="#000" stroke-width="1.600"/></svg>防止重叠
        </label>
        <div class="flex h-[270px] shrink-0 border-t border-b-2 border-[#666] bg-white">
            <table class="flex-1 self-start border-collapse text-[11px] leading-[14px]">
                <thead class="bg-linear-to-b from-[#e6e6e6] to-[#c8c8c8] text-[#222]">
                    <tr class="h-[19px] border-b border-[#777] text-left">
                        <th class="w-[22px] p-0 pl-1 border-r border-[#aaa]"><svg class="w-[15px] h-[11px]" viewBox="0 0 15 11"><path d="M0 6q3-6 8-5l6 3-2 1 3 3-4-2-2 5-2-1-4 1q-2-1-1-3z" fill="#333"/><path d="M5 6q3-3 5 0-2 3-5 0z" fill="#999"/></svg></th>
                        <th class="p-0 pb-px pl-1 font-normal">ID</th>
                        <th class="w-[33px] p-0 pb-px pl-1 border-x border-[#aaa] font-normal">Z</th>
                    </tr>
                </thead>
                <tbody>
                    <tr class="h-[19px] border-b border-white bg-[#c0c0c0]"><td></td><td class="p-0 pb-[3px] pl-6">apDiv3</td><td class="p-0 pb-[3px] pl-[5px]">2</td></tr>
                    <tr class="h-[19px] bg-[#c0c0c0]"><td></td><td class="p-0 pb-[3px] pl-6">apDiv2</td><td class="p-0 pb-[3px] pl-[5px]">1</td></tr>
                    <tr class="h-[19px]"><td></td><td class="p-0 pb-[3px] pl-6">apDiv1</td><td class="p-0 pb-[3px] pl-[5px]">1</td></tr>
                </tbody>
            </table>
            <div class="flex flex-col w-3">
                <div class="h-[19px] border-b border-[#777] bg-linear-to-b from-[#e6e6e6] to-[#c8c8c8]"></div>
                <div class="flex flex-col flex-1 items-center justify-between py-1 border-l border-[#777] bg-[#bebebe]">
                    <svg class="w-[7px] h-1" viewBox="0 0 8 5"><path d="M0 5h8L4 0z" fill="#666"/></svg>
                    <svg class="w-[7px] h-1" viewBox="0 0 8 5"><path d="M0 0h8L4 5z" fill="#666"/></svg>
                </div>
            </div>
        </div>
        <div class="flex h-[20px] shrink-0 mt-px border-t-2 border-b border-[#777] bg-[#a4a4a4] text-[#333]">
            <button class="w-[39px] h-[18px] bg-[#d6d6d6]">文件</button>
            <button class="w-10 border-x border-[#777]">资源</button>
            <button class="w-16 border-r border-[#777]">代码片断</button>
            <button class="ml-auto mr-1" aria-label="面板菜单"><svg class="w-[14px] h-[9px]"><use href="#panelMenu"/></svg></button>
        </div>
        <div class="flex gap-[5px] shrink-0 pt-[6px] px-[5px] font-['Liberation_Mono','Noto_Sans_CJK_SC',monospace]">
            <div class="grid items-center w-[142px]">
                <select aria-label="站点" class="col-start-1 row-start-1 appearance-none h-[21px] pl-[22px] border border-[#aaa] bg-[#dedede]"><option>未命名站点 2</option></select>
                <svg class="col-start-1 row-start-1 w-4 h-[13px] ml-[3px] pointer-events-none"><use href="#folder"/></svg>
                <svg class="col-start-1 row-start-1 justify-self-end w-[10px] h-[6px] mr-1 pointer-events-none"><use href="#chevron"/></svg>
            </div>
            <div class="grid items-center flex-1">
                <select aria-label="视图" class="col-start-1 row-start-1 appearance-none h-5 pl-[3px] border border-[#aaa] bg-[#dedede]"><option>本地视图</option></select>
                <svg class="col-start-1 row-start-1 justify-self-end w-[10px] h-[6px] mr-1 pointer-events-none"><use href="#chevron"/></svg>
            </div>
        </div>
        <div class="flex items-center justify-between h-[26px] shrink-0 pl-[10px] pr-1">
            <svg class="w-4 h-4" viewBox="0 0 16 16"><circle cx="2" cy="13" r="1.800" fill="#c33"/><path d="M2 1l5 2 2 3-3 3-4-3zM8 9l3-3 4 5 1 4-5-1z" fill="#bddcf8" stroke="#3a6fc0"/></svg>
            <svg class="w-4 h-4" viewBox="0 0 16 16"><path d="M12.500 5A5.500 5.500 0 1 0 13 10.500" fill="none" stroke="#4a4aa0" stroke-width="3"/><path d="M8 7h7V0z" fill="#4a4aa0"/></svg>
            <div class="h-5 border-l border-[#777]"></div>
            <svg class="w-4 h-4" viewBox="0 0 16 16"><path d="M5.500 1h5v7H14l-6 7-6-7h3.500z" fill="#aee69b" stroke="#206a2c"/></svg>
            <svg class="w-4 h-4" viewBox="0 0 16 16"><path d="M5.500 15h5V8H14L8 1 2 8h3.500z" fill="#66aee8" stroke="#1f4d85"/></svg>
            <svg class="w-4 h-4" viewBox="0 0 16 16"><path d="M4 2h4v7h3l-5 6-5-6h3z" fill="#ddd" stroke="#aaa"/><path d="M8 3l3 3 4-6" fill="none" stroke="#888" stroke-width="2"/></svg>
            <svg class="w-4 h-4" viewBox="0 0 16 16"><path d="M4 14h4V8h3L6 2 1 8h3z" fill="#ddd" stroke="#aaa"/><path d="M8 9h7v6H8zM9.500 9V7q2-2 4 0v2" fill="#ccc" stroke="#999"/></svg>
            <svg class="w-4 h-4" viewBox="0 0 16 16"><path d="M2 7q1-5 6-5 3 0 5 3" fill="none" stroke="#3a72ae" stroke-width="3"/><path d="M15 1v6H9z" fill="#3a72ae"/><path d="M14 9q-1 5-6 5-3 0-5-3" fill="none" stroke="#d98b2a" stroke-width="3"/><path d="M1 15V9h6z" fill="#d98b2a"/></svg>
            <div class="h-5 border-l border-[#777]"></div>
            <svg class="w-4 h-4" viewBox="0 0 16 16"><path d="M1 1h14v14H1z" fill="#fff" stroke="#2b80b8"/><path d="M1 2h14M1 7h5v8" fill="none" stroke="#2b80b8" stroke-width="1.500"/><path d="M7 10l6-6M9 4h4v4" fill="none" stroke="#2a6" stroke-width="1.500"/></svg>
        </div>
        <div class="flex-1 ml-[2px] mr-px border-t border-[#777] bg-white font-['Noto_Sans_CJK_SC',sans-serif]">
            <table class="w-[228px] border-collapse table-fixed">
                <thead>
                    <tr class="h-[15px] leading-[14px] bg-[#d6d6d6] border-b-2 border-black text-left">
                        <th class="w-[127px] p-0 pl-1 border-r-2 border-black">本地文件</th>
                        <th class="w-10 p-0 pr-1 border-r-2 border-black text-right">大小</th>
                        <th class="p-0 pl-[3px] border-r-2 border-black">类型</th>
                    </tr>
                </thead>
                <tbody>
                    <tr class="h-[18px] bg-[#d6d6d6]">
                        <td class="p-0"><div class="flex items-center pl-[21px]"><svg class="w-4 h-[13px] mr-3"><use href="#folder"/></svg><span>站点<span class="text-[10px] font-['Liberation_Mono',monospace]"> - </span>未<span class="text-[10px] font-['Liberation_Mono',monospace]">...</span></span></div></td>
                        <td></td>
                        <td class="p-0 pl-[3px]">文件夹</td>
                    </tr>
                </tbody>
            </table>
        </div>
        <div class="flex items-center h-[17px] shrink-0 ml-[2px] px-[5px] bg-[#f0f0f0]">
            <svg class="w-[6px] h-2" viewBox="0 0 6 8"><path d="M5 .5L1.500 4 5 7.500" fill="none" stroke="#444" stroke-width="1.800"/></svg>
            <div class="w-[65px] h-[15px] ml-[6px] bg-[#cdcdcd]"></div>
            <svg class="w-[6px] h-2 ml-auto" viewBox="0 0 6 8"><path d="M1 .5L4.500 4 1 7.500" fill="none" stroke="#444" stroke-width="1.800"/></svg>
        </div>
        <div class="flex items-center justify-between h-[23px] shrink-0 pl-1 pr-[5px] border-t-2 border-t-white border-b border-[#555] bg-linear-to-b from-[#ccc] to-[#eee]">
            <svg class="w-[17px] h-[17px]" viewBox="0 0 17 17"><use href="#globe" width="16" height="16"/><path d="M8 8h8v8H8z" fill="#fff" stroke="#9ab"/><path d="M10 10.500h4M10 12.500h4M10 14.500h4" stroke="#678"/></svg>
            <button class="w-[54px] h-4 leading-[14px] border border-[#aaa] bg-[#dedede] font-['Noto_Sans_CJK_SC',sans-serif]">日志<span class="text-[10px] font-['Liberation_Mono',monospace]">...</span></button>
        </div>
        <div class="flex justify-center items-center h-[7px] shrink-0"><svg class="w-5 h-[3px]"><path d="M0 1.500h20" stroke="#666" stroke-width="3" stroke-dasharray="1 1"/></svg></div>
    </aside>

    <!-- Highlight frame -->
    <div class="absolute left-[551px] top-[126px] w-[224px] h-[150px] border-3 border-[#fb3b3b] pointer-events-none"></div>

    <!-- Assistant ball and watermark -->
    <button class="absolute right-0 top-[807px] w-[50px] h-[50px]" aria-label="助手">
        <svg class="w-[50px] h-[50px]" viewBox="0 0 50 50"><circle cx="25" cy="25" r="23.800" fill="#e6e9ef" stroke="#3389f7" stroke-width="2"/><path d="M6 38V27Q8 10 25 9q17 1 18 18v11Q34 48 25 48T6 38z" fill="#c9ced6"/><path d="M5 34q20 6 39 0-6 14-19 14T5 34z" fill="#a5afbd"/><ellipse cx="20" cy="20" rx="3.500" ry="4.500" fill="#fff"/><ellipse cx="30" cy="20" rx="3.500" ry="4.500" fill="#fff"/><circle cx="21" cy="20" r="1.500" fill="#667"/><path d="M28 21q2-3 4 0" stroke="#667" fill="none" stroke-width="1.500"/><path d="M13 29q12-3 24 0-12 7-24 0z" fill="#fff"/></svg>
    </button>
    <div class="absolute right-[5px] top-[836px] text-[37px] leading-[44px] font-black text-[#808080] font-['Noto_Sans_CJK_SC',sans-serif] pointer-events-none">最需教育</div>

    <script>
        // Horizontal ruler labels, one every 50px
        for (let i = 0; i < window.innerWidth - 15; i += 50) {
            const label = document.createElement('span');
            label.className = 'w-[50px] shrink-0 pl-[2px]';
            label.textContent = i;
            document.getElementById('rulerX').appendChild(label);
        }

        // Vertical ruler labels, digits stacked
        for (let i = 0; i < window.innerHeight - 329; i += 50) {
            const label = document.createElement('div');
            label.className = 'w-[7px] h-[50px] pt-[3px] pl-px break-all';
            label.textContent = i;
            document.getElementById('rulerY').appendChild(label);
        }
    </script>

</body>
</html>
